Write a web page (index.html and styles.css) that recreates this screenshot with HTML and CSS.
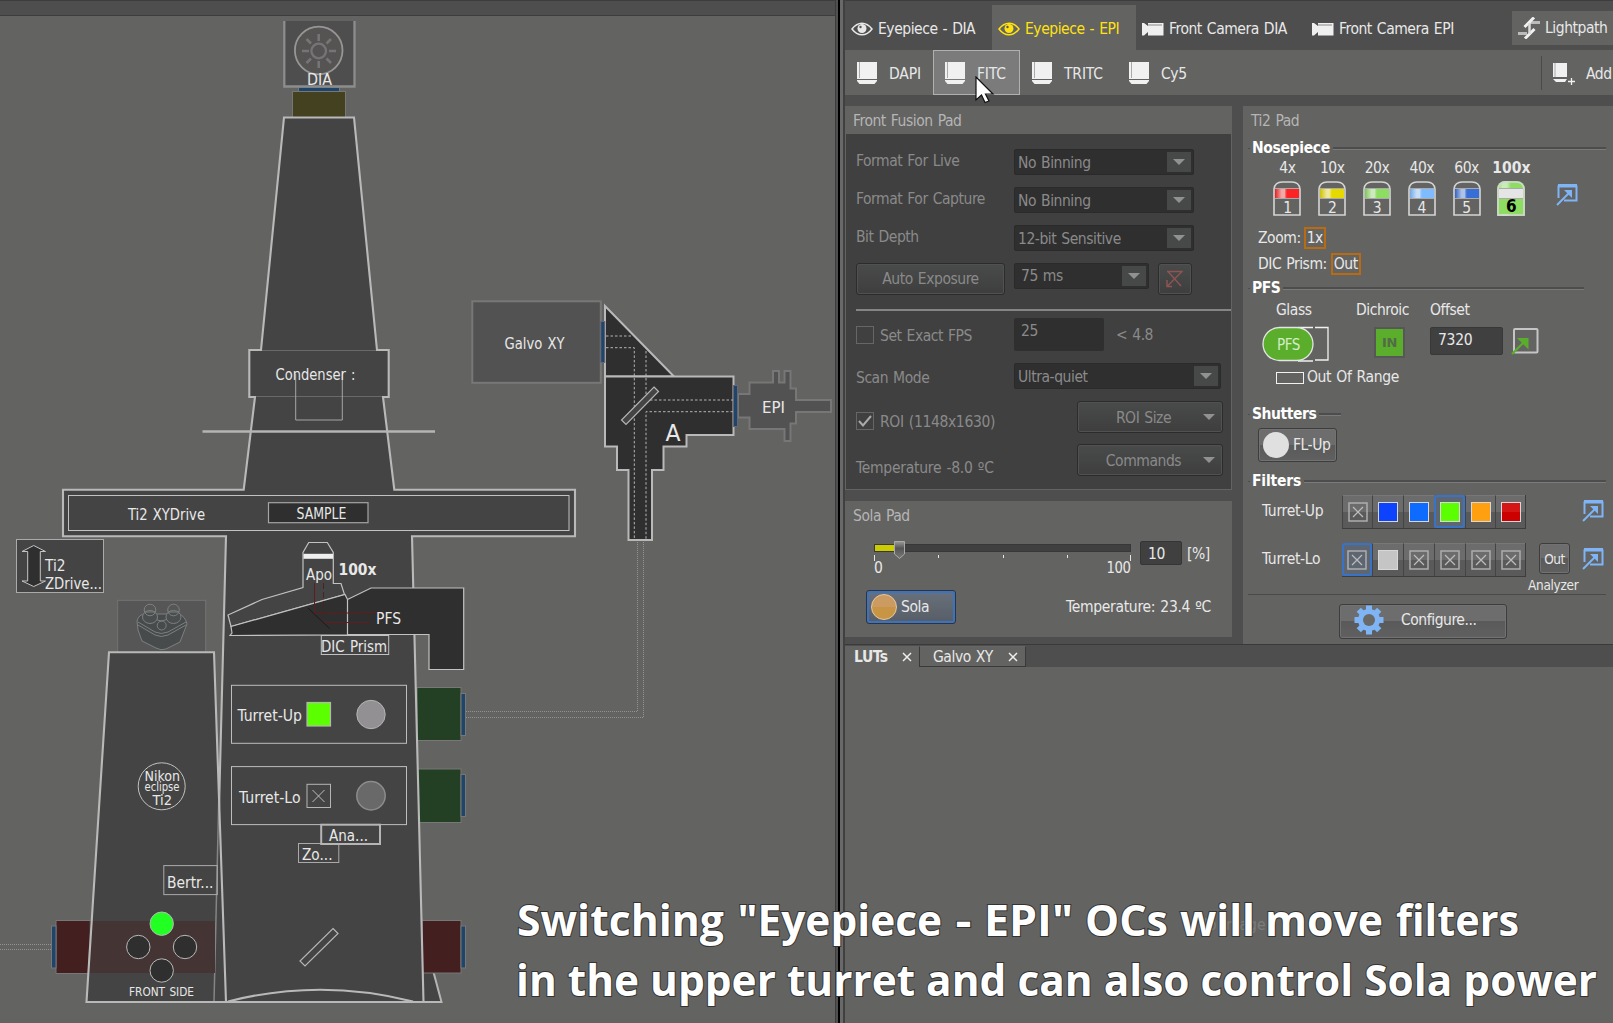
FILE: index.html
```html
<!DOCTYPE html>
<html lang="en">
<head>
<meta charset="utf-8">
<title>Microscope control</title>
<link rel="stylesheet" href="styles.css">
</head>
<body>
<svg class="defs" aria-hidden="true">
  <defs>
    <linearGradient id="thumb" x1="0" y1="0" x2="0" y2="1"><stop offset="0" stop-color="#9a9a9a"/><stop offset=".4" stop-color="#555"/><stop offset="1" stop-color="#7a7a7a"/></linearGradient>
  </defs>
  <symbol id="eye" viewBox="0 0 22 14"><path d="M1 7C4 3 7.500 1.200 11 1.200S18 3 21 7C18 11 14.500 12.800 11 12.800S4 11 1 7Z" fill="none" stroke="currentColor" stroke-width="1.500"/><circle cx="11" cy="6.500" r="4.500" fill="currentColor"/><circle cx="9.500" cy="5" r="1.200" fill="#555"/></symbol>
  <symbol id="camera" viewBox="0 0 22 14"><path d="M0 1H2L6 4V1H21.500V13.500H6V10L2 13.500H0Z" fill="#efefef"/><path d="M6 3H20" stroke="#888" stroke-width="1"/></symbol>
  <symbol id="cube" viewBox="0 0 20 23"><path d="M0 0H20V17H0Z" fill="#f1f1f1"/><path d="M2.500 0V16" stroke="#aaa"/><path d="M0 18H20V19L17.500 22H2.500L0 19Z" fill="#f1f1f1"/></symbol>
  <symbol id="link" viewBox="0 0 22 22"><path d="M2.500 14V2.500H20.500V16.500H8" fill="none" stroke="#7fb4f5" stroke-width="2"/><path d="M1 21L13 9" stroke="#7fb4f5" stroke-width="2"/><path d="M8 6H16V14Z" fill="#7fb4f5"/><path d="M2 1H21" stroke="#7fb4f5" stroke-width="2"/></symbol>
  <symbol id="none" viewBox="0 0 20 20"><path d="M1 1H19V19H1Z" fill="none" stroke="#adadad" stroke-width="1.500"/><path d="M5 5L15 15M15 5L5 15" stroke="#bdbdbd" stroke-width="1.200"/></symbol>
  <symbol id="objective" viewBox="0 0 28 35"><path d="M1 34V8Q2 1 9 1H19Q26 1 27 8V34Z" fill="none" stroke="#d5d5d5" stroke-width="1.600"/></symbol>
</svg>

<div class="app">
  <section class="lightpath">
    <div class="strip"></div>
    <svg class="diagram" viewBox="0 16 835 1007" width="835" height="1007">
      <!-- optical ports -->
      <g stroke="#777" stroke-width="1">
        <rect x="298.500" y="87" width="41" height="5" fill="#20456b"/>
        <rect x="292.500" y="91.500" width="53" height="26" fill="#444120"/>
        <rect x="417" y="687.500" width="44" height="53" fill="#244024"/><rect x="461" y="693.500" width="4.500" height="42" fill="#20456b"/>
        <rect x="417" y="769" width="44" height="53.500" fill="#244024"/><rect x="461" y="774.500" width="4.500" height="42" fill="#20456b"/>
      </g>
      <path d="M0 944.500H51M0 949.500H51M466 711.500H637.500V541M466 717.500H643.500V541" fill="none" stroke="#929292" stroke-dasharray="1 1"/>
      <!-- lamp house -->
      <rect x="284.300" y="21" width="70.200" height="65.500" fill="#4e4e4e"/>
      <path d="M284.300 21V86.500H354.500V21" fill="none" stroke="#8d8d8d" stroke-width="2.300"/>
      <circle cx="318.700" cy="50.500" r="23.800" fill="#555452" stroke="#969696" stroke-width="1.800"/>
      <circle cx="318.700" cy="51" r="7.300" fill="none" stroke="#757577" stroke-width="2.300"/>
      <path d="M318.700 34V41M318.700 61V68M302 51H309M329 51H336M306.500 39L311 43.500M326.500 58.500L331 63M306.500 63L311 58.500M326.500 43.500L331 39" stroke="#757577" stroke-width="2.600"/>
      <!-- stand -->
      <path d="M422 920L434 974L441.500 1002H420Z" fill="#444" stroke="#b5b5b5" stroke-width="2"/>
      <rect x="422" y="920.500" width="39" height="52.500" fill="#431f1f" stroke="#777"/><rect x="461" y="926" width="4.500" height="42" fill="#20456b" stroke="#777"/>
      <path d="M284 117.500H354L377 350H388.700V397H383L394.300 489.700H575V536.300H412L423.500 1002H214L226 536.300H63V489.700H243.700L255 397H249.300V350H261Z" fill="#444" stroke="#b9b9b9" stroke-width="2.100"/>
      <path d="M262 350.500H376M256 396.500H382" stroke="#696969"/>
      <rect x="117.700" y="600.300" width="88" height="52" fill="#565656" stroke="#737373"/>
      <g fill="none" stroke="#7c8080" stroke-width="1">
        <path d="M137 621Q139 614 145 614L179 614Q185 616 187 624L185 629L180 642L166 649Q161 651 156 648L142 641L138 630Z" fill="#484b4b"/>
        <path d="M138 622L155 632Q161 635 168 632L186 622M138 625L155 635Q161 638 168 635L186 625M154 619L161 621L169 619"/>
        <ellipse cx="150" cy="617" rx="7.500" ry="6.500" fill="#4b4e4e"/><ellipse cx="173.500" cy="617" rx="7.500" ry="6.500" fill="#4b4e4e"/>
        <circle cx="150" cy="610" r="5.800"/><circle cx="173.500" cy="610" r="5.800"/><path d="M144 612H156M168 612H179"/><circle cx="161.700" cy="625.500" r="4.500"/>
      </g>
      <path d="M109 652.300H214L226 1002H86.500Z" fill="#444"/>
      <path d="M219 790L214 1002" stroke="#858585" stroke-width="1.500"/>
      <path d="M90 920.500H56V973.500H88" fill="#431f1f" stroke="#777"/><rect x="51.500" y="926" width="4.500" height="42" fill="#20456b" stroke="#777"/>
      <rect x="89" y="921" width="126" height="52" fill="#443434"/>
      <path d="M109 652.300H214L226 1002H86.500Z" fill="none" stroke="#b9b9b9" stroke-width="2.100"/>
      <path d="M86.500 1002H441.500M228 1001.500Q320 978 413 1001.500" fill="none" stroke="#b9b9b9" stroke-width="2.100"/>
      <!-- condenser and stage -->
      <path d="M295.700 374V420H342.300V374" fill="none" stroke="#a5a5a5"/>
      <path d="M202.500 431.500H435" stroke="#b5b5b5" stroke-width="2.500"/>
      <rect x="68.500" y="495.500" width="500.500" height="35" fill="none" stroke="#c2c2c2"/>
      <rect x="268.500" y="502.700" width="99.500" height="20" fill="#2f2f2f" stroke="#a5a5a5" stroke-width="1.200"/>
      <rect x="16.500" y="539.500" width="87" height="53" fill="#444" stroke="#aaa"/>
      <path d="M33.700 545.500L45.500 551.500H40.300V581H45.500L33.700 586.500L22 581H27.700V551.500H22Z" fill="#2f2f2f" stroke="#c5c5c5"/>
      <!-- nosepiece and focus arm -->
      <path d="M308.700 542.500H327.300L333.300 552.500V583.500H341L344.500 594.500L231 626.500L228 615L262 599.500L303 587.500V552.500Z" fill="#444" stroke="#c2c2c2" stroke-width="1.200"/>
      <path d="M231 626.500L345 594.500L347.500 599.500L371 588H463.700V669.500H429V634.500H347.500V599.500V634.800L230 635.500L232 633Z" fill="#2f2f2f" stroke="#c2c2c2" stroke-width="1.200"/>
      <path d="M303.500 556.300H333" stroke="#efefef" stroke-width="5"/>
      <path d="M314.500 583V613.500L381 612.500M323.500 622.500H370" fill="none" stroke="#611d1d"/><path d="M323.500 583V622" stroke="#4a2222" stroke-dasharray="6 3"/>
      <path d="M308 608L329.500 628.500" stroke="#1b1b1b"/>
      <rect x="321.300" y="635.500" width="67.400" height="19" fill="#444" stroke="#c2c2c2"/>
      <!-- filter turrets -->
      <g fill="none" stroke="#bdbdbd"><rect x="231.500" y="685.300" width="175" height="58"/><rect x="231.500" y="766.600" width="175" height="58"/></g>
      <rect x="307" y="702.500" width="23.500" height="23.500" fill="#5cff00" stroke="#b5b5b5" stroke-width="1.200"/>
      <circle cx="371" cy="714.500" r="14.200" fill="#929092" stroke="#b5b5b5"/>
      <rect x="307" y="784.300" width="23.500" height="23.200" fill="none" stroke="#b5b5b5"/><path d="M312.500 790L324.500 802M324.500 790L312.500 802" stroke="#bdbdbd"/>
      <circle cx="371" cy="795.800" r="14.200" fill="#696969" stroke="#8c8c8c" stroke-width="1.500"/>
      <rect x="298.500" y="843.500" width="40.300" height="19" fill="#444" stroke="#aaa"/>
      <rect x="321.200" y="824.700" width="58.800" height="19.300" fill="#444" stroke="#b5b5b5" stroke-width="2"/>
      <rect x="163.800" y="865.600" width="53.500" height="29" fill="none" stroke="#aaa"/>
      <circle cx="161.700" cy="786.300" r="23.500" fill="none" stroke="#c2c2c2"/>
      <g fill="#2f2f2f" stroke="#b9b9b9"><circle cx="161.700" cy="923.700" r="11.700" fill="#22ff22"/><circle cx="138.300" cy="947" r="11.700"/><circle cx="185" cy="947" r="11.700"/><circle cx="161.700" cy="970.500" r="11.700"/></g>
      <path d="M333 928.500L338 933.500L305 966L300 961Z" fill="none" stroke="#b5b5b5" stroke-width="1.200"/>
      <!-- galvo and epi arm -->
      <rect x="472.300" y="301.300" width="128.500" height="81.500" fill="#525252" stroke="#777" stroke-width="2"/>
      <path d="M605 306V376.500H674Z" fill="#2f2f2f" stroke="#b9b9b9" stroke-width="2"/>
      <path d="M605 376.500H733.500V435H686.500V446.500H663.500V470H652V540H628.500V470H617V446.500H605Z" fill="#2f2f2f" stroke="#b9b9b9" stroke-width="2"/>
      <path d="M606 336H632M606 347.700H634.300V540M646 351V400M650 400H733M733 411.700H646V540" fill="none" stroke="#b5b5b5" stroke-dasharray="2.500 2"/>
      <path d="M654 387L658.500 391.500L626 424.500L621.500 420Z" fill="#444" stroke="#b5b5b5" stroke-width="1.200"/>
      <path d="M738 394H749.500V382.500H773V371H779V382.500H784.500V371H790.500V388.500H796V400H831V412H796V423.500H790.500V441H784.500V429H749.500V417.500H738Z" fill="#525252" stroke="#777" stroke-width="2"/>
      <g fill="#20456b" stroke="#667"><rect x="600.800" y="321.500" width="4" height="41"/><rect x="733.500" y="385.500" width="4" height="41"/></g>
      <g class="labels">
        <text x="307" y="84.500" textLength="25" lengthAdjust="spacingAndGlyphs">DIA</text>
        <text x="275.500" y="379.500" textLength="80" lengthAdjust="spacingAndGlyphs">Condenser :</text>
        <text x="128" y="519.500" textLength="77" lengthAdjust="spacingAndGlyphs">Ti2 XYDrive</text>
        <text x="296.500" y="519" textLength="50" lengthAdjust="spacingAndGlyphs">SAMPLE</text>
        <text x="45" y="571" textLength="20.500" lengthAdjust="spacingAndGlyphs">Ti2</text>
        <text x="45" y="588.500" textLength="57" lengthAdjust="spacingAndGlyphs">ZDrive...</text>
        <text x="306" y="579.500" textLength="26" lengthAdjust="spacingAndGlyphs">Apo</text>
        <text class="bold" x="338.500" y="574.500" textLength="38" lengthAdjust="spacingAndGlyphs">100x</text>
        <text x="376" y="624" textLength="25" lengthAdjust="spacingAndGlyphs">PFS</text>
        <text x="321" y="652" textLength="66" lengthAdjust="spacingAndGlyphs">DIC Prism</text>
        <text x="237.500" y="721" textLength="64.500" lengthAdjust="spacingAndGlyphs">Turret-Up</text>
        <text x="239" y="802.500" textLength="61.500" lengthAdjust="spacingAndGlyphs">Turret-Lo</text>
        <text x="329" y="841" textLength="39" lengthAdjust="spacingAndGlyphs">Ana...</text>
        <text x="302" y="860" textLength="30.500" lengthAdjust="spacingAndGlyphs">Zo...</text>
        <text x="167" y="888" textLength="46.500" lengthAdjust="spacingAndGlyphs">Bertr...</text>
        <text class="mid" x="144.500" y="780.500" textLength="35.500" lengthAdjust="spacingAndGlyphs">Nikon</text>
        <text class="small" x="144.500" y="791" textLength="35" lengthAdjust="spacingAndGlyphs">eclipse</text>
        <text class="mid" x="152.500" y="805" textLength="19.500" lengthAdjust="spacingAndGlyphs">Ti2</text>
        <text class="small" x="129" y="995.500" textLength="65" lengthAdjust="spacingAndGlyphs">FRONT SIDE</text>
        <text x="504.500" y="349" textLength="60" lengthAdjust="spacingAndGlyphs">Galvo XY</text>
        <text x="762" y="413" textLength="23" lengthAdjust="spacingAndGlyphs">EPI</text>
        <text class="big" x="665.500" y="441" textLength="15" lengthAdjust="spacingAndGlyphs">A</text>
      </g>
    </svg>
  </section>
  <div class="splitter"></div>

  <section class="controls">
    <nav class="modes">
      <div class="mode w147"><svg class="i-eye"><use href="#eye"/></svg>Eyepiece - DIA</div>
      <div class="mode w144 active"><svg class="i-eye"><use href="#eye"/></svg>Eyepiece - EPI</div>
      <div class="mode w170"><svg class="i-eye"><use href="#camera"/></svg>Front Camera DIA</div>
      <div class="mode"><svg class="i-eye"><use href="#camera"/></svg>Front Camera EPI</div>
      <div class="lightpath-btn"><svg width="22" height="22" viewBox="0 0 22 22"><path d="M0 16.500H9M12 5.500H22" stroke="#bbb" stroke-width="3"/><path d="M6.500 10L16 .500M7 21.500L16.500 12" stroke="#f1f1f1" stroke-width="3"/><path d="M11.500 6V17" stroke="#ddd" stroke-width="2.500"/></svg>Lightpath</div>
    </nav>
    <nav class="channels">
      <div class="channel c1"><svg class="i-cube"><use href="#cube"/></svg>DAPI</div>
      <div class="channel c2 hover"><svg class="i-cube"><use href="#cube"/></svg>FITC
        <svg class="cursor" width="20" height="28" viewBox="0 0 20 28"><path d="M1 1V24L6.500 19L10 26.500L14 25L10.500 18H18Z" fill="#fff" stroke="#111" stroke-width="1.200"/></svg></div>
      <div class="channel c3"><svg class="i-cube"><use href="#cube"/></svg>TRITC</div>
      <div class="channel c4"><svg class="i-cube"><use href="#cube"/></svg>Cy5</div>
      <div class="add"><svg width="22" height="24" viewBox="0 0 22 24"><path d="M0 1H14V15H0Z" fill="#f1f1f1"/><path d="M2 1V15" stroke="#aaa"/><path d="M0 17H14L12 20H3Z" fill="#f1f1f1"/><path d="M15 19.500H22M18.500 16V23" stroke="#f1f1f1" stroke-width="1.300"/></svg><span>Add</span></div>
    </nav>
    <div class="pads">
      <div class="left-pads">
        <div class="pad fusion">
          <h2>Front Fusion Pad</h2>
          <div class="fusion-body">
            <div class="row r38"><label class="up">Format For Live</label><div class="select w180">No Binning<i></i></div></div>
            <div class="row r38"><label class="up">Format For Capture</label><div class="select w180">No Binning<i></i></div></div>
            <div class="row r38"><label class="up">Bit Depth</label><div class="select w180">12-bit Sensitive<i></i></div></div>
            <div class="row r47"><div class="btn w149">Auto Exposure</div><div class="select w135">75 ms<i></i></div><div class="btn icon-btn"><svg width="17" height="18" viewBox="0 0 17 18"><path d="M1 1.500H16L1 16.500M2 1.500L15 16M1 10V16.500H6" fill="none" stroke="#8a5552" stroke-width="1.500"/></svg></div></div>
            <div class="rule"></div>
            <div class="row fps"><b class="check"></b><label class="short">Set Exact FPS</label><div class="field">25</div><span class="limit">&lt; 4.8</span></div>
            <div class="row scan"><label>Scan Mode</label><div class="select w207">Ultra-quiet<i></i></div></div>
            <div class="row roi"><b class="check low"><svg width="16" height="16" viewBox="0 0 16 16"><path d="M2 8L6 12.500L14 3" fill="none" stroke="#aaa" stroke-width="2"/></svg></b><label class="long">ROI (1148x1630)</label><div class="btn drop">ROI Size<i></i></div></div>
            <div class="row temp"><label class="wide">Temperature -8.0 ºC</label><div class="btn drop">Commands<i></i></div></div>
          </div>
        </div>
        <div class="pad sola">
          <h2>Sola Pad</h2>
          <div class="slider-row">
            <svg width="262" height="38" viewBox="0 0 262 38"><rect x="2.500" y="3.500" width="256" height="7" fill="#404040" stroke="#383838"/><rect x="3" y="4" width="21" height="6" fill="#cccc00"/><path d="M2.500 14V20M258.500 14V20M66.500 14V17M131.500 14V17M195.500 14V17" stroke="#e5e5e5"/><path d="M22.500 .500H32.500V13L27.500 17.500L22.500 13Z" fill="url(#thumb)" stroke="#aaa"/><text x="2" y="31.500" class="scale">0</text><text x="234.500" y="31.500" textLength="24" lengthAdjust="spacingAndGlyphs" class="scale">100</text></svg>
            <div class="power">10</div><span>[%]</span>
          </div>
          <div class="sola-row"><div class="sola-btn"><b></b>Sola</div><span>Temperature: 23.4 ºC</span></div>
        </div>
      </div>

      <div class="pad ti2">
        <h2>Ti2 Pad</h2>
        <h3 class="s-nose">Nosepiece</h3>
        <div class="nose">
          <div class="obj">4x<div class="barrel red"><svg><use href="#objective"/></svg><b></b><u>1</u></div></div>
          <div class="obj">10x<div class="barrel yellow"><svg><use href="#objective"/></svg><b></b><u>2</u></div></div>
          <div class="obj">20x<div class="barrel green"><svg><use href="#objective"/></svg><b></b><u>3</u></div></div>
          <div class="obj">40x<div class="barrel sky"><svg><use href="#objective"/></svg><b></b><u>4</u></div></div>
          <div class="obj">60x<div class="barrel blue"><svg><use href="#objective"/></svg><b></b><u>5</u></div></div>
          <div class="obj on">100x<div class="barrel current"><svg><use href="#objective"/></svg><b></b><u>6</u></div></div>
          <svg class="i-link"><use href="#link"/></svg>
        </div>
        <div class="state z">Zoom: <em>1x</em></div>
        <div class="state">DIC Prism: <em>Out</em></div>
        <h3 class="s-pfs">PFS</h3>
        <div class="pfs-heads"><span>Glass</span><span>Dichroic</span><span>Offset</span></div>
        <div class="pfs">
          <svg width="68" height="36" viewBox="0 0 68 36"><path d="M36 1.500H51M53 1.500H66V34H53M51 35H36" fill="none" stroke="#f1f1f1" stroke-width="1.300"/><rect x="1" y="1.500" width="50" height="33" rx="16.500" fill="#5aae2b" stroke="#e5e5e5" stroke-width="1.300"/><text x="15" y="23.500" textLength="23" lengthAdjust="spacingAndGlyphs" class="pfs-text">PFS</text></svg>
          <div class="in">IN</div>
          <div class="offset">7320</div>
          <svg class="goto" width="28" height="28" viewBox="0 0 28 28"><rect x="3" y="2" width="23.500" height="23.500" rx="1" fill="none" stroke="#c5c5c8" stroke-width="2"/><path d="M1 27L12 16" stroke="#5aae2b" stroke-width="2.200"/><path d="M6 11H17.500V22.500Z" fill="#5aae2b"/></svg>
        </div>
        <div class="range"><b></b>Out Of Range</div>
        <h3 class="s-shut">Shutters</h3>
        <div class="shutter"><b></b>FL-Up</div>
        <h3 class="s-filt">Filters</h3>
        <div class="turret">
          <label>Turret-Up</label>
          <div class="cells"><div><svg><use href="#none"/></svg></div><div><b class="f-blue"></b></div><div><b class="f-azure"></b></div><div class="sel"><b class="f-green"></b></div><div><b class="f-orange"></b></div><div><b class="f-red"></b></div></div>
          <svg class="i-link far"><use href="#link"/></svg>
        </div>
        <div class="turret lo">
          <label>Turret-Lo</label>
          <div class="cells"><div class="sel"><svg><use href="#none"/></svg></div><div><b class="f-white"></b></div><div><svg><use href="#none"/></svg></div><div><svg><use href="#none"/></svg></div><div><svg><use href="#none"/></svg></div><div><svg><use href="#none"/></svg></div></div>
          <div class="out">Out</div>
          <svg class="i-link"><use href="#link"/></svg>
        </div>
        <div class="analyzer">Analyzer</div>
        <div class="divider"></div>
        <div class="configure"><svg width="30" height="30" viewBox="-15 -15 30 30"><g fill="#7fb4f5"><rect x="-3" y="-14.500" width="6" height="29"/><rect x="-3" y="-14.500" width="6" height="29" transform="rotate(45)"/><rect x="-3" y="-14.500" width="6" height="29" transform="rotate(90)"/><rect x="-3" y="-14.500" width="6" height="29" transform="rotate(135)"/><circle r="11"/></g><circle r="6" fill="#696968"/></svg>Configure...</div>
      </div>
    </div>
    <div class="tabs"><div class="tab front">LUTs<svg width="10" height="10" viewBox="0 0 10 10"><path d="M1 1L9 9M9 1L1 9" stroke="#eee" stroke-width="1.500"/></svg></div><div class="tab back">Galvo XY<svg width="10" height="10" viewBox="0 0 10 10"><path d="M1 1L9 9M9 1L1 9" stroke="#eee" stroke-width="1.500"/></svg></div></div>
    <div class="luts">No Image</div>
  </section>
</div>
<svg class="caption" width="1113" height="143" viewBox="500 880 1113 143">
  <text y="936"><tspan x="517" textLength="207" lengthAdjust="spacingAndGlyphs">Switching</tspan> <tspan x="737.500" textLength="204.500" lengthAdjust="spacingAndGlyphs">"Eyepiece</tspan> <tspan x="955.500" textLength="16" lengthAdjust="spacingAndGlyphs">-</tspan> <tspan x="984" textLength="89" lengthAdjust="spacingAndGlyphs">EPI"</tspan> <tspan x="1085" textLength="83" lengthAdjust="spacingAndGlyphs">OCs</tspan> <tspan x="1180" textLength="75" lengthAdjust="spacingAndGlyphs">will</tspan> <tspan x="1265" textLength="118" lengthAdjust="spacingAndGlyphs">move</tspan> <tspan x="1396" textLength="123" lengthAdjust="spacingAndGlyphs">filters</tspan></text>
  <text x="516" y="996" textLength="1081" lengthAdjust="spacingAndGlyphs">in the upper turret and can also control Sola power</text>
</svg>
</body>
</html>
```
FILE: styles.css
```css
* { box-sizing: border-box; }
body { margin: 0; background: #4e4e4e; color: #e8e8e8; font: 15.5px/20px "DejaVu Sans Condensed", "DejaVu Sans", sans-serif; font-stretch: condensed; letter-spacing: -.45px; word-spacing: 1px; overflow: hidden; white-space: nowrap; }
h2, h3 { margin: 0; font-size: 15.5px; line-height: 20px; }
svg { flex: none; display: block; }
.defs { position: absolute; width: 0; height: 0; }
.app { display: flex; width: 1613px; height: 1023px; }
.lightpath { width: 835px; flex: none; background: #636361; }
.strip { height: 16px; background: #4e4e4e; border-top: 1px solid #3d3d3d; border-bottom: 1px solid #3d3d3d; }
.splitter { flex: none; width: 10px; background: linear-gradient(90deg, #3d3d3d 0 1px, #505050 1px 3px, #000 3px 4.500px, #696969 5px 8px, #404040 8px 10px); }
.diagram { margin-top: -.5px; }
.labels text { fill: #e8e8e8; font-size: 15px; letter-spacing: 0; }
.labels .bold { font-weight: bold; font-size: 16px; }
.labels .mid { font-size: 14.500px; }
.labels .small { font-size: 12px; }
.labels .big { font-size: 23px; }

.controls { flex: none; width: 768px; display: flex; flex-direction: column; overflow: hidden; }
.modes { height: 50px; border-top: 1px solid #3d3d3d; padding-top: 4px; display: flex; }
.mode { display: flex; align-items: center; gap: 5px; padding: 2px 0 0 6px; }
.w147 { width: 147px; } .w144 { width: 144px; } .w170 { width: 170px; }
.i-eye { width: 22px; height: 14px; }
.active { background: #636361; color: #ffe210; }
.lightpath-btn { margin: 6px 0 5px auto; width: 101px; background: #636361; display: flex; align-items: center; gap: 5px; padding-left: 6px; }
.channels { height: 45px; background: #636361; display: flex; }
.channel { display: flex; align-items: center; gap: 12px; padding-left: 12px; padding-top: 2px; position: relative; letter-spacing: -.15px; }
.c1 { width: 88px; } .c2 { width: 87px; padding-left: 11px; } .c3 { padding-left: 12px; width: 97px; } .c4 { width: 100px; letter-spacing: -.4px; }
.hover { background: #7b7b7b; border: 1px solid #b0b0b0; padding-top: 2px; }
.i-cube { width: 20px; height: 23px; }
.cursor { position: absolute; left: 41px; top: 25px; }
.add { margin: 6px 0 5px auto; border-left: 1px solid #4a4a4a; width: 72px; padding: 1px 0 0 11px; display: flex; align-items: center; gap: 11px; }
.pads { display: flex; gap: 11px; margin-top: 11px; height: 538px; }
.left-pads { width: 387px; flex: none; }
.pad { background: #636361; }
.pad h2 { font-weight: normal; color: #b5b5b5; padding: 5px 8px 3px; height: 28px; }
.fusion { height: 384px; padding: 0 1px 1px 1px; }
.fusion h2 { padding-left: 7px; }
.fusion-body { height: 355px; background: #404040; color: #8a8a8a; padding: 9px 0 0 10px; }
.row { display: flex; align-items: center; }
.row label { width: 158px; flex: none; }
.row .up { padding-bottom: 3px; }
.r38 { height: 38px; }
.r47 { height: 46px; align-items: flex-start; padding-top: 6px; }
.select { height: 26px; background: #2f2f2f; border: 1px solid #2a2a2a; border-radius: 2px; padding: 1px 2px 0 3px; display: flex; align-items: center; justify-content: space-between; }
.select i { width: 24px; height: 20px; margin-top: -1px; background: #474948; display: flex; align-items: center; justify-content: center; }
.select i::before, .drop i::before { content: ""; display: block; border: 6px solid transparent; border-top-color: #919191; border-bottom: 0; }
.w180 { width: 180px; } .w207 { width: 207px; }
.w135 { width: 135px; margin: 0 9px 0 9px; padding: 0 2px 0 6px; }
.btn { height: 32px; background: linear-gradient(#494b4a, #3e3e3e); border: 1px solid #2c2c2c; border-radius: 3px; box-shadow: inset 0 0 0 1px #515151; display: flex; align-items: center; justify-content: center; }
.w149 { width: 149px; }
.r47 .icon-btn { width: 34px; padding-right: 2px; }
.rule { height: 2px; background: #858585; margin: 6px 0 7px; }
.fps { height: 33px; }
.fps .short { padding-top: 2px; }
.check { width: 18px; height: 18px; border: 1px solid #666; margin-right: 6px; flex: none; }
.low { margin-top: 8px; }
.row .short { width: 134px; }
.field { width: 90px; height: 33px; background: #2f2f2f; border-radius: 2px; padding: 3px 7px; }
.limit { margin-left: 12px; }
.scan { height: 50px; }
.scan label { padding-top: 3px; }
.roi { height: 32px; }
.row .long { width: 197px; padding-top: 9px; letter-spacing: -.35px; }
.drop { width: 146px; position: relative; padding-right: 13px; padding-top: 1px; }
.drop i { position: absolute; right: 7px; top: 12px; }
.temp { margin-top: 11px; height: 32px; }
.row .wide { width: 221px; padding-top: 16px; letter-spacing: -.25px; }
.sola { margin-top: 11px; height: 136px; }
.slider-row { display: flex; padding: 12px 0 0 27px; }
.power { width: 42px; height: 24px; background: #404040; border: 1px solid #353535; border-radius: 2px; padding: 2px 7px; margin: 0 5px 0 6px; }
.slider-row span { padding-top: 3px; }
.scale { fill: #e8e8e8; }
.sola-row { display: flex; justify-content: space-between; align-items: center; padding: 11px 21px 0 21px; }
.sola-row span { letter-spacing: -.3px; }
.sola-btn { width: 90px; height: 34px; border: 1px solid #333; border-radius: 3px; box-shadow: inset 0 0 0 2px #3873c6; background: linear-gradient(#69717c, #565d66); display: flex; align-items: center; gap: 4px; padding-left: 4px; }
.sola-btn b { width: 26px; height: 26px; border-radius: 50%; border: 1.500px solid #e8c9a0; background: linear-gradient(#cc9b61 50%, #c89545 50%); }
.ti2 { width: 370px; flex: none; }
.ti2 h3 { display: flex; align-items: center; gap: 3px; padding-left: 5px; height: 20px; color: #fff; }
.ti2 h3::before { content: ""; width: 2px; height: 1px; background: #4d4d4d; flex: none; margin-right: -1px; }
.ti2 h3::after { content: ""; flex: 1; height: 2px; background: #4d4d4d; border-bottom: 1px solid #7a7a7a; }
.ti2 .s-nose { margin-top: 4px; margin-right: 7px; letter-spacing: -.35px; }
.nose { display: flex; padding-left: 22px; }
.obj { width: 44.800px; text-align: center; }
.on { font-weight: bold; letter-spacing: 0; }
.barrel { width: 28px; height: 35px; margin: 3px auto 0; position: relative; }
.barrel svg { position: absolute; width: 28px; height: 35px; }
.barrel b { position: absolute; left: 2px; right: 2px; top: 7px; height: 11px; border-top: 1px solid #aaa; border-bottom: 1px solid #aaa; background: linear-gradient(90deg, rgba(0,0,0,.1), rgba(240,240,240,.65) 28% 40%, rgba(255,255,255,.2) 45%, transparent 50%) var(--band); }
.barrel u { position: absolute; left: 0; right: 0; top: 17px; text-decoration: none; }
.red { --band: #fb2525; } .yellow { --band: #e6d900; } .green { --band: #8cdd62; } .sky { --band: #7fbcff; } .blue { --band: #386fd6; }
.current { --band: #e5e5e5; background: linear-gradient(90deg, #8cdd62, #c7edb5 20% 35%, #8cdd62 50%); border-radius: 8px 8px 0 0; }
.current b { background: #e5e5e5; }
.current u { color: #000; font-size: 17px; background: #8cdd62; left: 2px; right: 2px; top: 18px; line-height: 15px; }
.i-link { width: 22px; height: 22px; }
.nose .i-link { margin: 26px 0 0 22px; }
.state { height: 26px; display: flex; align-items: center; gap: 4px; padding-left: 15px; }
.state.z { margin-top: 9px; gap: 3px; }
em { font-style: normal; border: 2px solid #b86b13; padding: 0 1px; line-height: 18px; }
.ti2 .s-pfs { margin-top: 1px; margin-right: 29px; }
.pfs-heads { display: flex; padding-left: 33px; margin-top: 2px; }
.pfs-heads span:nth-child(1) { width: 80px; } .pfs-heads span:nth-child(2) { width: 74px; }
.pfs { display: flex; padding: 6px 0 0 19px; height: 42px; }
.pfs-text { fill: #d5ebc7; }
.in { width: 31px; height: 31px; margin: 1px 0 0 44px; border: 2px solid #575757; background: #5aae2b; color: #536b46; font: bold 13px/28px "DejaVu Sans", sans-serif; text-align: center; }
.offset { width: 73px; height: 28px; margin: 1px 8px 0 25px; background: #404040; border: 1px solid #383838; border-radius: 2px; padding: 2px 7px; letter-spacing: -.3px; }
.goto { margin-top: 1px; }
.range { display: flex; align-items: center; gap: 3px; height: 22px; padding-left: 33px; margin-top: 4px; letter-spacing: -.35px; }
.range b { width: 28px; height: 12px; border: 1px solid #f1f1f1; margin-top: 2px; }
.ti2 .s-shut { margin-top: 16px; margin-right: 272px; }
.shutter, .out, .configure { background: linear-gradient(#6d6d6d 50%, #5a5a5a 50%, #606060); border: 1px solid #3d3d3d; border-radius: 3px; box-shadow: inset 0 0 0 1px #727272; display: flex; align-items: center; }
.shutter { width: 79px; height: 34px; margin: 4px 0 9px 15px; padding-left: 4px; gap: 4px; }
.shutter b { width: 26px; height: 26px; border-radius: 50%; background: #e0e0e0; }
.ti2 .s-filt { margin-right: 7px; letter-spacing: -.2px; }
.turret { display: flex; margin-top: 4px; padding-left: 19px; }
.turret label { width: 80px; padding-top: 6px; letter-spacing: -.3px; }
.turret.lo { margin-top: 14px; }
.cells { display: grid; grid-template-columns: 30px 31px 31px 31px 30px 30px; height: 34px; border-bottom: 1px solid #3d3d3d; border-right: 1px solid #3d3d3d; }
.cells div { border-left: 1px solid #444; border-top: 1px solid #777; background: linear-gradient(#6c6c6c 50%, #5a5a5a 50%); display: flex; align-items: center; justify-content: center; }
.cells svg { width: 20px; height: 20px; }
.cells b { width: 20px; height: 20px; border: 1.500px solid #d8d8d8; }
.cells .sel { border: 2px solid #3873c6; border-radius: 3px; background: #5d6671; }
.f-blue { background: #0d43ff; } .f-azure { background: #0d6cff; } .f-green { background: #5cff00; } .f-orange { background: #ffa010; } .f-red { background: linear-gradient(#d51616 50%, #cc0000 50%); } .f-white { background: #c5c5c5; }
.far { margin: 5px 0 0 56px; }
.lo .i-link { margin: 5px 0 0 12px; }
.out { width: 31px; height: 31px; margin-left: 13px; font-size: 13.500px; justify-content: center; }
.analyzer { font-size: 13.500px; padding-left: 285px; height: 17px; line-height: 17px; letter-spacing: -.3px; }
.divider { height: 1px; background: #4a4a4a; margin: 0 7px 9px 5px; }
.configure { width: 168px; height: 35px; margin-left: 96px; padding: 0 0 3px 14px; gap: 17px; }
.tabs { height: 23px; border-top: 1px solid #3a3a3a; display: flex; padding-top: 1px; }
.tab { display: flex; align-items: center; background: #636361; height: 21px; }
.front { width: 74px; padding-left: 9px; gap: 14px; font-weight: bold; }
.back { width: 107px; padding-left: 13px; gap: 15px; border: 1px solid #3a3a3a; border-top-color: #666; }
.luts { flex: 1; background: #636361; color: #7c7c7a; display: flex; align-items: center; justify-content: center; padding: 160px 0 0 5px; letter-spacing: 0; }
.caption { position: absolute; left: 500px; top: 880px; }
.caption text { font: bold 43px "Open Sans", "Noto Sans", sans-serif; letter-spacing: 0; word-spacing: 0; fill: #fff; stroke: #333; stroke-width: 2px; paint-order: stroke; }
```
